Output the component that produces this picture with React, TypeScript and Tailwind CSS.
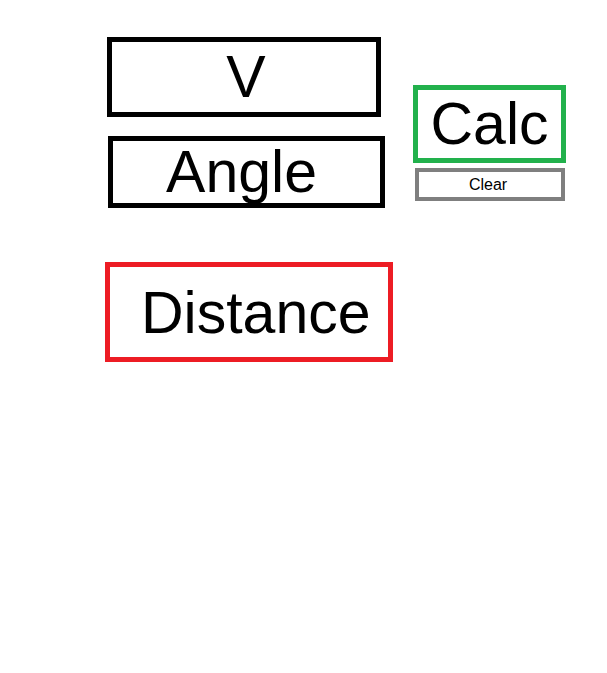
export default function App() {
  return (
    <div
      className="min-h-screen bg-white text-black"
      style={{ fontFamily: '"Liberation Sans", Arial, sans-serif' }}
    >
      <div className="flex items-start pt-[37px]">
        {/* inputs */}
        <div className="ml-[105px] flex flex-col items-start">
          <div className="ml-[2px] flex h-[80px] w-[274px] items-center justify-center border-[5px] border-black pl-[4px] text-[59px]">
            V
          </div>
          <div className="ml-[3px] mt-[19px] flex h-[72px] w-[277px] items-center justify-center border-[5px] border-black pr-[10px] text-[59px]">
            Angle
          </div>
          <div className="mt-[54px] flex h-[100px] w-[288px] items-center border-[5px] border-[#ed1c24] pl-[31px] pt-[2px] text-[59px]">
            Distance
          </div>
        </div>

        {/* buttons */}
        <div className="ml-[20px] mt-[48px] flex flex-col items-start">
          <div className="flex h-[78px] w-[153px] items-center justify-center border-[5px] border-[#22b14c] text-[59px]">
            Calc
          </div>
          <div className="ml-[2px] mt-[5px] flex h-[33px] w-[150px] items-center justify-center border-4 border-[#7f7f7f] pr-[4px] text-[16px]">
            Clear
          </div>
        </div>
      </div>
    </div>
  )
}
